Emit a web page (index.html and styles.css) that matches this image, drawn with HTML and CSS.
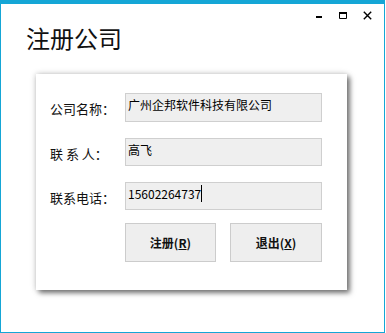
FILE: index.html
```html
<!DOCTYPE html>
<html lang="zh-CN">
<head>
<meta charset="utf-8">
<title>注册公司</title>
<link rel="stylesheet" href="styles.css">
</head>
<body>
<div class="window">
  <div class="controls">
    <svg class="ctl" width="8" height="9" viewBox="0 0 8 9"><rect x="1" y="5" width="6" height="2" fill="#000"/></svg>
    <svg class="ctl" width="8" height="9" viewBox="0 0 8 9"><path d="M0.5 1.5 H7.5 V7.5 H0.5 Z" fill="none" stroke="#000" stroke-width="1"/><rect x="0" y="1" width="8" height="2" fill="#000"/></svg>
    <svg class="ctl" width="9" height="9" viewBox="0 0 9 9"><path d="M0.8 0.8 L8.2 8.2 M8.2 0.8 L0.8 8.2" stroke="#000" stroke-width="1.4" fill="none"/></svg>
  </div>
  <h1 class="title">注册公司</h1>
  <div class="card">
    <div class="row">
      <span class="label">公司名称：</span>
      <div class="field first">广州企邦软件科技有限公司</div>
    </div>
    <div class="row">
      <span class="label">联 系 人：</span>
      <div class="field">高飞</div>
    </div>
    <div class="row">
      <span class="label">联系电话：</span>
      <div class="field"><span class="caret">15602264737</span></div>
    </div>
    <div class="buttons">
      <button class="btn narrow">注册(<u>R</u>)</button>
      <button class="btn">退出(<u>X</u>)</button>
    </div>
  </div>
</div>
</body>
</html>
```
FILE: styles.css
```css
html, body {
  margin: 0;
  padding: 0;
  background: #ffffff;
}
body {
  font-family: "Noto Sans CJK SC", "Noto Sans", sans-serif;
  color: #111;
}
.window {
  position: relative;
  box-sizing: border-box;
  width: 385px;
  height: 333px;
  border: 1px solid #15a6d6;
  border-top-width: 4px;
  background: #fff;
  padding: 0 0 0 35px;
}
.controls {
  position: absolute;
  top: 7px;
  right: 12px;
  display: flex;
  gap: 16px;
  align-items: flex-start;
}
.ctl {
  display: block;
}
.title {
  margin: 0 0 0 -10px;
  padding: 19px 0 0 0;
  font-size: 24px;
  font-weight: normal;
  line-height: 30px;
  height: 70px;
  box-sizing: border-box;
  color: #111;
}
.card {
  box-sizing: border-box;
  width: 311px;
  height: 216px;
  background: #fff;
  box-shadow: 3px 3px 5px rgba(0,0,0,0.5), 0 0 6px rgba(0,0,0,0.22);
  padding: 19px 25px 0 14px;
  display: flex;
  flex-direction: column;
  gap: 16px;
}
.row {
  display: flex;
  align-items: center;
}
.label {
  width: 75px;
  font-size: 13px;
  line-height: 18px;
  padding-top: 3px;
  white-space: pre;
}
.field {
  box-sizing: border-box;
  width: 197px;
  height: 28px;
  background: #efefef;
  border: 1px solid #cfcfcf;
  font-size: 12px;
  line-height: 16px;
  padding: 3px 0 0 2px;
  color: #000;
}
.field.first {
  height: 29px;
}
.caret {
  border-right: 1px solid #000;
  padding-right: 0;
}
.buttons {
  display: flex;
  gap: 14px;
  margin: -3px 0 0 75px;
}
.btn {
  box-sizing: border-box;
  width: 92px;
  height: 39px;
  background: #eeeeee;
  border: 1px solid #cccccc;
  font-family: "Noto Sans CJK SC", "Noto Sans", sans-serif;
  font-size: 12px;
  font-weight: bold;
  color: #111;
  padding: 0;
}
.btn.narrow {
  width: 91px;
}
.btn u {
  text-decoration-thickness: 1px;
}
```
